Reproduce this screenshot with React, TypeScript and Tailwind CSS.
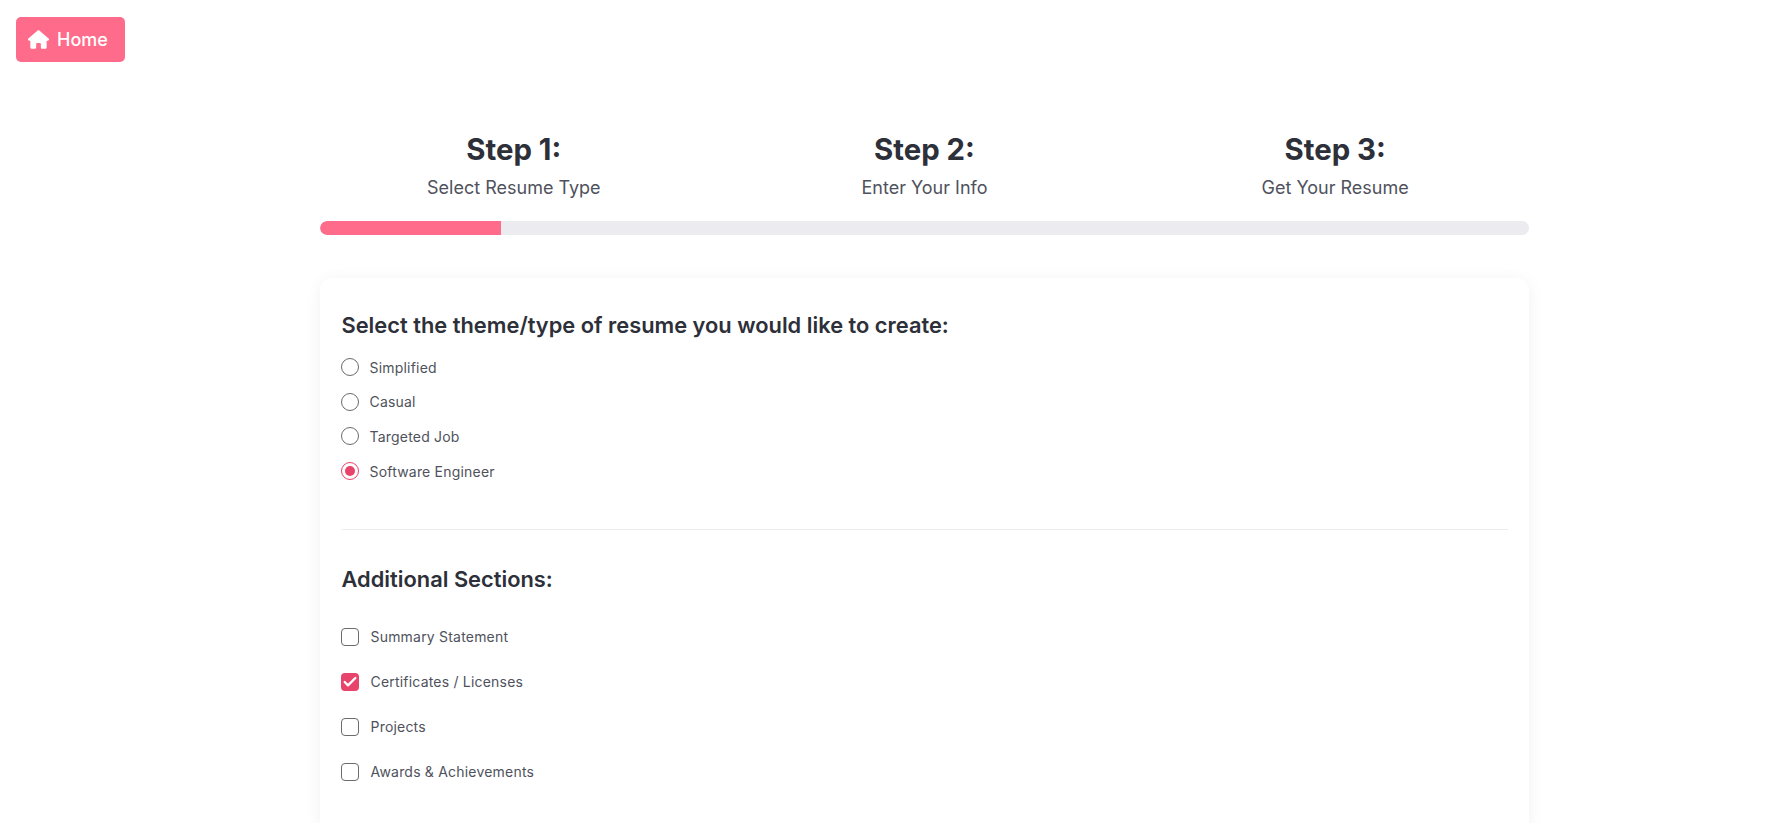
import { FaHouse } from 'react-icons/fa6';
import { Check } from 'lucide-react';

const steps = [
  { title: 'Step 1:', sub: 'Select Resume Type' },
  { title: 'Step 2:', sub: 'Enter Your Info' },
  { title: 'Step 3:', sub: 'Get Your Resume' },
];

const themes = ['Simplified', 'Casual', 'Targeted Job', 'Software Engineer'];

const sections = [
  { label: 'Summary Statement', checked: false },
  { label: 'Certificates / Licenses', checked: true },
  { label: 'Projects', checked: false },
  { label: 'Awards & Achievements', checked: false },
];

function Radio({ label, checked }: { label: string; checked: boolean }) {
  return (
    <div className="flex items-center h-[34.6px] -ml-[1px] gap-[11px]">
      <span className={`flex items-center justify-center w-[18px] h-[18px] rounded-full border ${checked ? 'border-[#e8436a]' : 'border-[#6b6b6b]'}`}>
        {checked && <span className="w-[10px] h-[10px] rounded-full bg-[#e8436a]" />}
      </span>
      <span className="text-[14px] tracking-[0.2px] text-[#4f525c]">{label}</span>
    </div>
  );
}

function CheckRow({ label, checked }: { label: string; checked: boolean }) {
  return (
    <div className="flex items-center h-[45px] -ml-[1px] gap-[12px]">
      {checked ? (
        <span className="flex items-center justify-center w-[18px] h-[18px] rounded-[4px] bg-[#e8436a]">
          <Check size={16} strokeWidth={3.5} className="text-white" />
        </span>
      ) : (
        <span className="w-[18px] h-[18px] rounded-[4px] border border-[#6b6b6b]" />
      )}
      <span className="text-[14px] tracking-[0.2px] text-[#4f525c]">{label}</span>
    </div>
  );
}

export default function App() {
  return (
    <div className="h-screen overflow-hidden bg-white font-['Inter',sans-serif]">
      {/* Home button */}
      <div className="pt-[17px] pl-[16px]">
        <button className="flex items-center gap-[8px] w-[109px] h-[45px] pl-[12px] rounded-[5px] bg-[#ff6b8a] text-white text-[18px] font-medium">
          <FaHouse size={21} />
          Home
        </button>
      </div>

      <div className="w-[1209px] ml-[320px]">
        {/* Steps */}
        <div className="grid grid-cols-3 gap-[23px] mt-[71px] text-center">
          {steps.map(s => (
            <div key={s.title}>
              <h2 className="text-[29.33px] leading-[34px] font-bold text-[#2d3039]">{s.title}</h2>
              <p className="mt-[10px] text-[18px] leading-[22px] text-[#4f525c]">{s.sub}</p>
            </div>
          ))}
        </div>

        {/* Progress */}
        <div className="mt-[22px] h-[14px] rounded-full overflow-hidden bg-[#ebebf0]">
          <div className="h-full w-[15%] rounded-l-full bg-[#ff6b8a]" />
        </div>

        {/* Form card */}
        <div className="mt-[43px] rounded-[12px] bg-white shadow-[0_2px_16px_rgba(0,0,0,0.06)] px-[21.5px] pt-[33px] pb-[40px]">
          <h3 className="text-[21.85px] leading-[28px] font-semibold text-[#2d3039]">
            Select the theme/type of resume you would like to create:
          </h3>
          <div className="mt-[11px] pb-[41px] border-b border-[#ecedf1]">
            {themes.map(t => (
              <Radio key={t} label={t} checked={t === 'Software Engineer'} />
            ))}
          </div>
          <h3 className="mt-[35px] text-[21.85px] leading-[28px] font-semibold text-[#2d3039]">
            Additional Sections:
          </h3>
          <div className="mt-[21px]">
            {sections.map(s => (
              <CheckRow key={s.label} label={s.label} checked={s.checked} />
            ))}
          </div>
        </div>
      </div>
    </div>
  );
}
